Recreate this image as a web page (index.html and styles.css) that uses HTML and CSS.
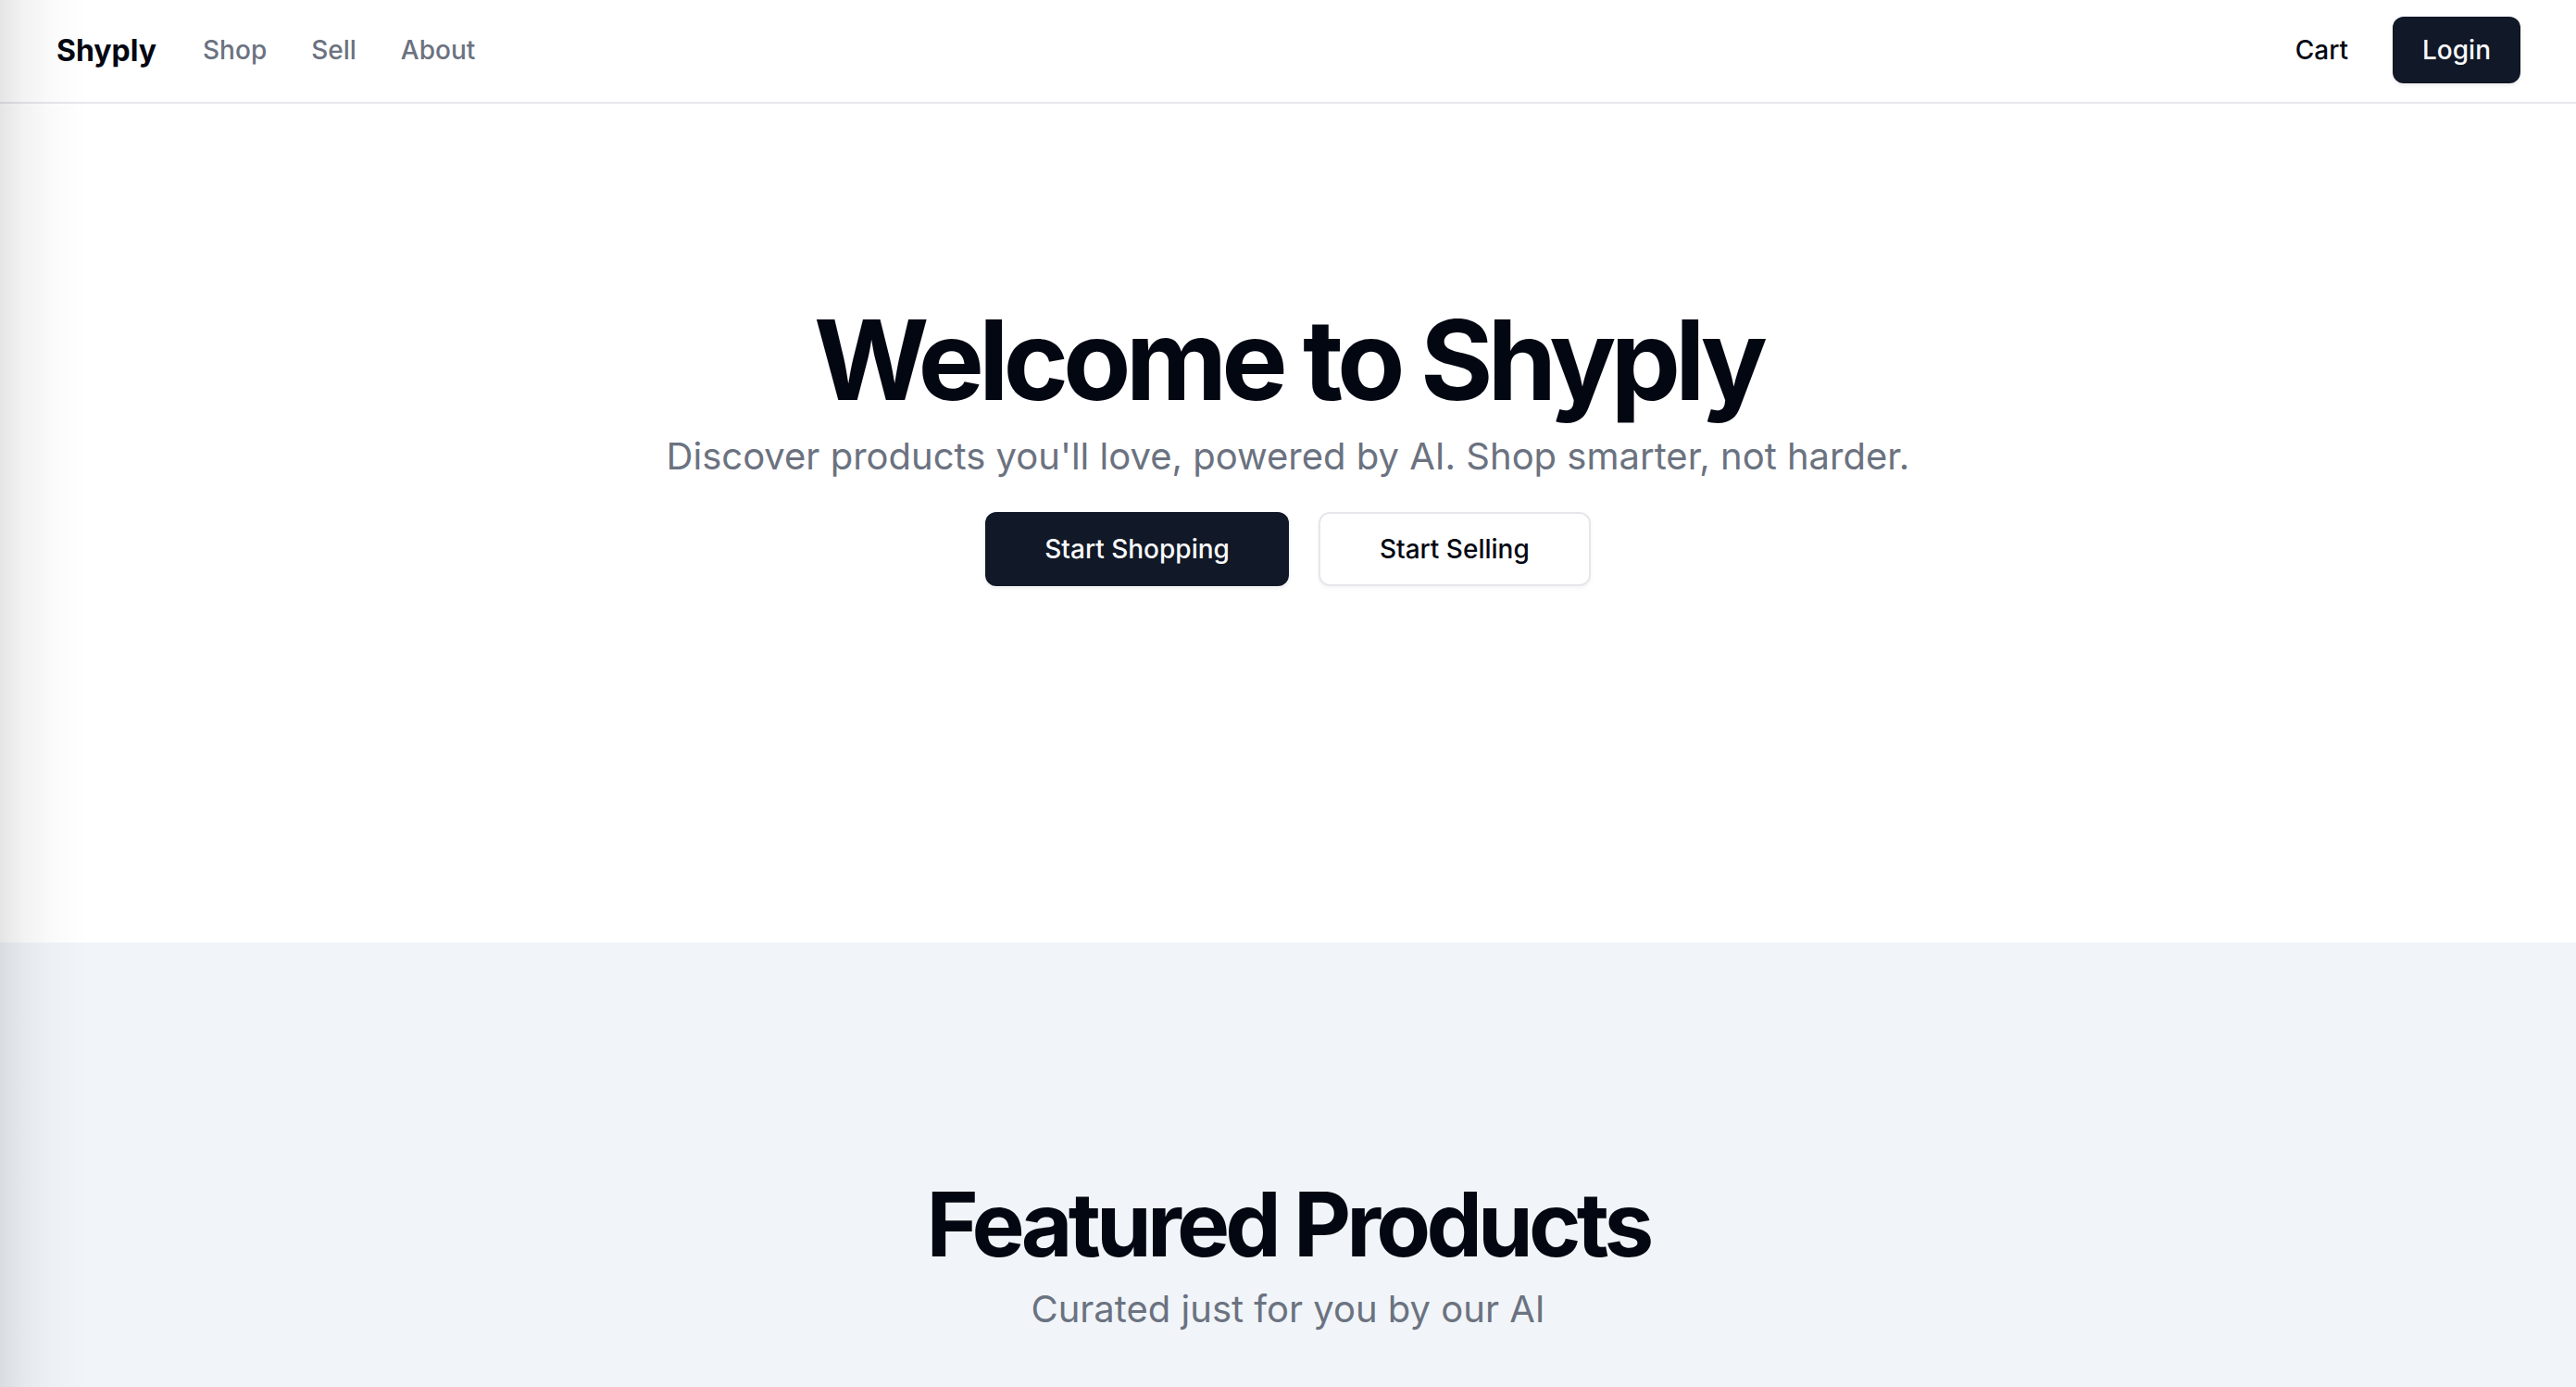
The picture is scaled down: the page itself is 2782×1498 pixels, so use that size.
FILE: index.html
```html
<!DOCTYPE html>
<html lang="en">
<head>
<meta charset="utf-8">
<title>Shyply</title>
<link rel="stylesheet" href="styles.css">
</head>
<body>
<div class="page">
  <header class="nav">
    <div class="nav-left">
      <a class="logo" href="#">Shyply</a>
      <nav class="links">
        <a href="#">Shop</a>
        <a href="#">Sell</a>
        <a href="#">About</a>
      </nav>
    </div>
    <div class="nav-right">
      <button class="btn btn-ghost">Cart</button>
      <button class="btn btn-dark btn-nav">Login</button>
    </div>
  </header>
  <main>
    <section class="hero">
      <h1 class="hero-title">Welcome to Shyply</h1>
      <p class="hero-sub">Discover products you'll love, powered by AI. Shop smarter, not harder.</p>
      <div class="hero-actions">
        <button class="btn btn-dark btn-lg">Start Shopping</button>
        <button class="btn btn-outline btn-lg">Start Selling</button>
      </div>
    </section>
    <section class="featured">
      <h2 class="featured-title">Featured Products</h2>
      <p class="featured-sub">Curated just for you by our AI</p>
    </section>
  </main>
  <div class="edge-shadow"></div>
</div>
</body>
</html>
```

FILE: styles.css
```css
* { box-sizing: border-box; }
html, body { margin: 0; padding: 0; }
body {
  font-family: Inter, "Noto Sans", "Liberation Sans", sans-serif;
  color: #030712;
  background: #ffffff;
  overflow: hidden;
}
.page {
  position: relative;
  width: 2782px;
  height: 1498px;
  overflow: hidden;
}
.nav {
  height: 112px;
  border-bottom: 2px solid #e5e7eb;
  display: flex;
  align-items: center;
  justify-content: space-between;
  padding: 0 60px 2px 61px;
}
.nav-left { display: flex; align-items: center; gap: 50px; }
.logo {
  font-size: 32px;
  font-weight: 700;
  color: #030712;
  text-decoration: none;
}
.links { display: flex; gap: 48px; }
.links a {
  font-size: 28px;
  font-weight: 500;
  color: #6b7280;
  text-decoration: none;
}
.nav-right { display: flex; align-items: center; gap: 16px; }
.btn {
  font-family: inherit;
  font-size: 28px;
  font-weight: 500;
  border: none;
  border-radius: 12px;
  cursor: pointer;
  display: inline-flex;
  align-items: center;
  justify-content: center;
}
.btn-ghost {
  background: transparent;
  color: #030712;
  height: 72px;
  padding: 0 32px;
}
.btn-dark {
  background: #111827;
  color: #f9fafb;
  box-shadow: 0 2px 4px rgba(0,0,0,0.08);
}
.btn-nav { height: 72px; padding: 0 32px; }
.btn-lg { height: 80px; padding: 0 64px; }
.btn-outline {
  background: #ffffff;
  color: #030712;
  border: 2px solid #e5e7eb;
  box-shadow: 0 2px 4px rgba(0,0,0,0.05);
}
.hero {
  height: 906px;
  padding-top: 217px;
  display: flex;
  flex-direction: column;
  align-items: center;
  text-align: center;
}
.hero-title {
  margin: 0;
  font-size: 120px;
  line-height: 1;
  font-weight: 700;
  letter-spacing: -6px;
}
.hero-sub {
  margin: 16px 0 0;
  font-size: 40px;
  line-height: 56px;
  color: #6b7280;
}
.hero-actions {
  margin-top: 32px;
  display: flex;
  gap: 32px;
}
.featured {
  background: #f1f5f9;
  height: 480px;
  padding-top: 256px;
  display: flex;
  flex-direction: column;
  align-items: center;
  text-align: center;
}
.featured-title {
  margin: 0;
  font-size: 96px;
  line-height: 1;
  font-weight: 700;
  letter-spacing: -4.8px;
}
.featured-sub {
  margin: 16px 0 0;
  font-size: 40px;
  line-height: 56px;
  color: #6b7280;
}
.edge-shadow {
  position: absolute;
  left: 0;
  top: 0;
  bottom: 0;
  width: 100px;
  pointer-events: none;
  background: linear-gradient(to right, rgba(0,0,0,0.1), rgba(0,0,0,0.05) 25px, rgba(0,0,0,0.02) 55px, rgba(0,0,0,0) 95px);
}
```
